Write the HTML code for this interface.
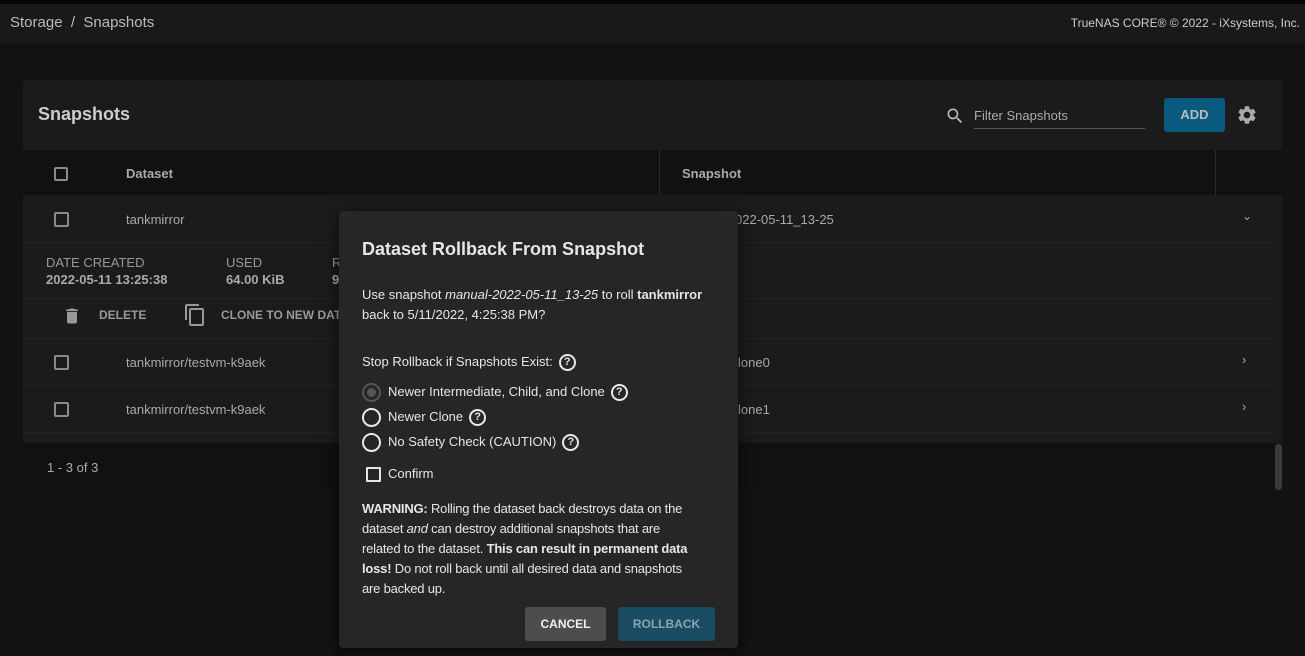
<!DOCTYPE html>
<html><head><style>
*{margin:0;padding:0;box-sizing:border-box}
body{width:1305px;height:656px;background:#121212;font-family:"Liberation Sans",sans-serif;color:#bdbdbd;position:relative;overflow:hidden;font-size:13px}
.abs{position:absolute}
.cb{position:absolute;width:14px;height:14px;border:2px solid #8a8a8a;border-radius:2px}
.help{display:inline-block;width:17px;height:17px;border:2px solid #e8e8e8;border-radius:50%;font-size:11px;font-weight:bold;text-align:center;line-height:13px;color:#e8e8e8;vertical-align:middle;margin-left:6px}
.radio{position:absolute;width:19px;height:19px;border:2px solid #e8e8e8;border-radius:50%}
</style></head><body>
<div class="abs" style="left:0;top:0;width:1305px;height:4px;background:#050505"></div>
<div class="abs" style="left:0;top:4px;width:1305px;height:40px;background:#191919"></div>
<div class="abs" style="left:10px;top:14px;font-size:15px;color:#bbb">Storage &nbsp;/&nbsp; Snapshots</div>
<div class="abs" style="right:5px;top:16px;font-size:12px;color:#ccc">TrueNAS CORE® © 2022 - iXsystems, Inc.</div>

<div class="abs" style="left:23px;top:80px;width:1259px;height:410px;background:#1b1b1b;border-radius:4px"></div>
<div class="abs" style="left:38px;top:104px;font-size:18px;font-weight:bold;color:#ccc">Snapshots</div>
<svg class="abs" style="left:945px;top:106px" width="20" height="20" viewBox="0 0 24 24"><path fill="#bbb" d="M15.5 14h-.79l-.28-.27A6.470 6.470 0 0016 9.5 6.5 6.5 0 109.5 16c1.61 0 3.09-.59 4.230-1.57l.27.28v.79l5 4.99L20.49 19l-4.99-5zm-6 0C7.01 14 5 11.990 5 9.5S7.01 5 9.5 5 14 7.01 14 9.5 11.99 14 9.5 14z"/></svg>
<div class="abs" style="left:974px;top:108px;font-size:13px;color:#aaa">Filter Snapshots</div>
<div class="abs" style="left:974px;top:128px;width:171px;height:1px;background:#555"></div>
<div class="abs" style="left:1164px;top:98px;width:61px;height:34px;background:#0a5a80;border-radius:3px;color:#bbb;font-weight:bold;text-align:center;line-height:34px;font-size:13px">ADD</div>
<svg class="abs" style="left:1236px;top:104px" width="22" height="22" viewBox="0 0 24 24"><path fill="#aaa" d="M19.14 12.94c.04-.3.06-.61.06-.94 0-.32-.02-.64-.07-.94l2.030-1.58a.49.49 0 00.12-.61l-1.92-3.32a.488.488 0 00-.59-.22l-2.39.96c-.5-.38-1.030-.7-1.62-.94l-.36-2.54a.484.484 0 00-.48-.41h-3.84c-.24 0-.43.17-.47.41l-.36 2.54c-.59.24-1.13.57-1.62.94l-2.39-.96c-.22-.08-.47 0-.59.22L2.74 8.87c-.12.21-.08.47.12.61l2.03 1.58c-.05.3-.09.63-.09.94s.02.64.07.94l-2.03 1.58a.49.49 0 00-.12.61l1.92 3.32c.12.22.37.29.59.22l2.39-.96c.5.38 1.03.7 1.62.94l.36 2.54c.05.24.24.41.48.41h3.84c.24 0 .44-.17.47-.41l.36-2.54c.59-.24 1.13-.56 1.62-.94l2.39.96c.22.08.47 0 .59-.22l1.92-3.32c.12-.22.07-.47-.12-.61l-2.01-1.58zM12 15.6c-1.98 0-3.6-1.62-3.6-3.6s1.62-3.6 3.6-3.6 3.6 1.62 3.6 3.6-1.62 3.6-3.6 3.6z"/></svg>

<div class="abs" style="left:23px;top:150px;width:1259px;height:45px;background:#111"></div>
<div class="abs" style="left:659px;top:150px;width:1px;height:45px;background:#2a2a2a"></div>
<div class="abs" style="left:1215px;top:150px;width:1px;height:45px;background:#2a2a2a"></div>
<div class="cb" style="left:54px;top:167px"></div>
<div class="abs" style="left:126px;top:166px;font-weight:bold;color:#aaa">Dataset</div>
<div class="abs" style="left:682px;top:166px;font-weight:bold;color:#aaa">Snapshot</div>

<div class="cb" style="left:54px;top:212px;width:15px;height:15px"></div>
<div class="abs" style="left:126px;top:212px;color:#aaa">tankmirror</div>
<div class="abs" style="left:735px;top:212px;color:#aaa">022-05-11_13-25</div>
<div class="abs" style="left:1242px;top:209px;color:#aaa;font-size:12px">⌄</div>
<div class="abs" style="left:23px;top:242px;width:1250px;height:1px;background:#222"></div>
<div class="abs" style="left:46px;top:255px;color:#999;font-size:13px">DATE CREATED</div>
<div class="abs" style="left:46px;top:272px;color:#aaa;font-weight:bold;font-size:13px">2022-05-11 13:25:38</div>
<div class="abs" style="left:226px;top:255px;color:#999">USED</div>
<div class="abs" style="left:226px;top:272px;color:#aaa;font-weight:bold">64.00 KiB</div>
<div class="abs" style="left:332px;top:255px;color:#999">R</div>
<div class="abs" style="left:332px;top:272px;color:#aaa;font-weight:bold">9</div>
<div class="abs" style="left:23px;top:298px;width:1250px;height:1px;background:#222"></div>
<svg class="abs" style="left:62px;top:305px" width="20" height="22" viewBox="0 0 24 24"><path fill="#999" d="M6 19c0 1.1.9 2 2 2h8c1.1 0 2-.9 2-2V7H6v12zM19 4h-3.5l-1-1h-5l-1 1H5v2h14V4z"/></svg>
<div class="abs" style="left:99px;top:308px;font-weight:bold;color:#999;font-size:12px">DELETE</div>
<svg class="abs" style="left:183px;top:303px" width="24" height="24" viewBox="0 0 24 24"><path fill="#999" d="M16 1H4c-1.1 0-2 .9-2 2v14h2V3h12V1zm3 4H8c-1.1 0-2 .9-2 2v14c0 1.1.9 2 2 2h11c1.1 0 2-.9 2-2V7c0-1.1-.9-2-2-2zm0 16H8V7h11v14z"/></svg>
<div class="abs" style="left:221px;top:308px;font-weight:bold;color:#999;font-size:12px">CLONE TO NEW DAT</div>
<div class="abs" style="left:23px;top:338px;width:1250px;height:1px;background:#222"></div>
<div class="cb" style="left:54px;top:355px;width:15px;height:15px"></div>
<div class="abs" style="left:126px;top:355px;color:#aaa">tankmirror/testvm-k9aek</div>
<div class="abs" style="left:738px;top:355px;color:#aaa">lone0</div>
<div class="abs" style="left:1242px;top:352px;color:#aaa">›</div>
<div class="abs" style="left:23px;top:385px;width:1250px;height:1px;background:#222"></div>
<div class="cb" style="left:54px;top:402px;width:15px;height:15px"></div>
<div class="abs" style="left:126px;top:402px;color:#aaa">tankmirror/testvm-k9aek</div>
<div class="abs" style="left:738px;top:402px;color:#aaa">lone1</div>
<div class="abs" style="left:1242px;top:399px;color:#aaa">›</div>
<div class="abs" style="left:23px;top:432px;width:1250px;height:1px;background:#222"></div>
<div class="abs" style="left:23px;top:443px;width:1259px;height:47px;background:#111"></div>
<div class="abs" style="left:47px;top:460px;color:#aaa">1 - 3 of 3</div>
<div class="abs" style="left:1275px;top:444px;width:7px;height:46px;background:#3a3a3a;border-radius:3px"></div>

<div class="abs" style="left:339px;top:211px;width:399px;height:437px;background:#262626;border-radius:4px;box-shadow:0 4px 16px rgba(0,0,0,.6)"></div>
<div class="abs" style="left:362px;top:239px;font-size:18px;font-weight:bold;color:#e6e6e6">Dataset Rollback From Snapshot</div>
<div class="abs" style="left:362px;top:285px;width:370px;font-size:13px;line-height:20px;color:#e6e6e6">Use snapshot <i>manual-2022-05-11_13-25</i> to roll <b>tankmirror</b><br>back to 5/11/2022, 4:25:38 PM?</div>
<div class="abs" style="left:362px;top:354px;color:#e6e6e6">Stop Rollback if Snapshots Exist:<span class="help">?</span></div>
<div class="radio" style="left:362px;top:383px;border-color:#555"><div style="margin:3px;width:9px;height:9px;border-radius:50%;background:#555"></div></div>
<div class="abs" style="left:388px;top:384px;color:#e6e6e6">Newer Intermediate, Child, and Clone<span class="help">?</span></div>
<div class="radio" style="left:362px;top:408px"></div>
<div class="abs" style="left:388px;top:409px;color:#e6e6e6">Newer Clone<span class="help">?</span></div>
<div class="radio" style="left:362px;top:433px"></div>
<div class="abs" style="left:388px;top:434px;color:#e6e6e6">No Safety Check (CAUTION)<span class="help">?</span></div>
<div class="abs" style="left:366px;top:467px;width:15px;height:15px;border:2px solid #e6e6e6;border-radius:1px"></div>
<div class="abs" style="left:388px;top:466px;color:#e6e6e6">Confirm</div>
<div class="abs" style="left:362px;top:499px;width:370px;line-height:20px;color:#e6e6e6;white-space:nowrap;letter-spacing:-0.2px"><b>WARNING:</b> Rolling the dataset back destroys data on the<br>dataset <i>and</i> can destroy additional snapshots that are<br>related to the dataset. <b>This can result in permanent data</b><br><b>loss!</b> Do not roll back until all desired data and snapshots<br>are backed up.</div>
<div class="abs" style="left:525px;top:607px;width:81px;height:34px;background:#4d4d4d;border-radius:3px;color:#f0f0f0;font-weight:bold;text-align:center;line-height:34px;font-size:12px">CANCEL</div>
<div class="abs" style="left:618px;top:607px;width:97px;height:34px;background:#1a4c63;border-radius:3px;color:#8aa4b0;font-weight:bold;text-align:center;line-height:34px;font-size:12px">ROLLBACK</div>
</body></html>
